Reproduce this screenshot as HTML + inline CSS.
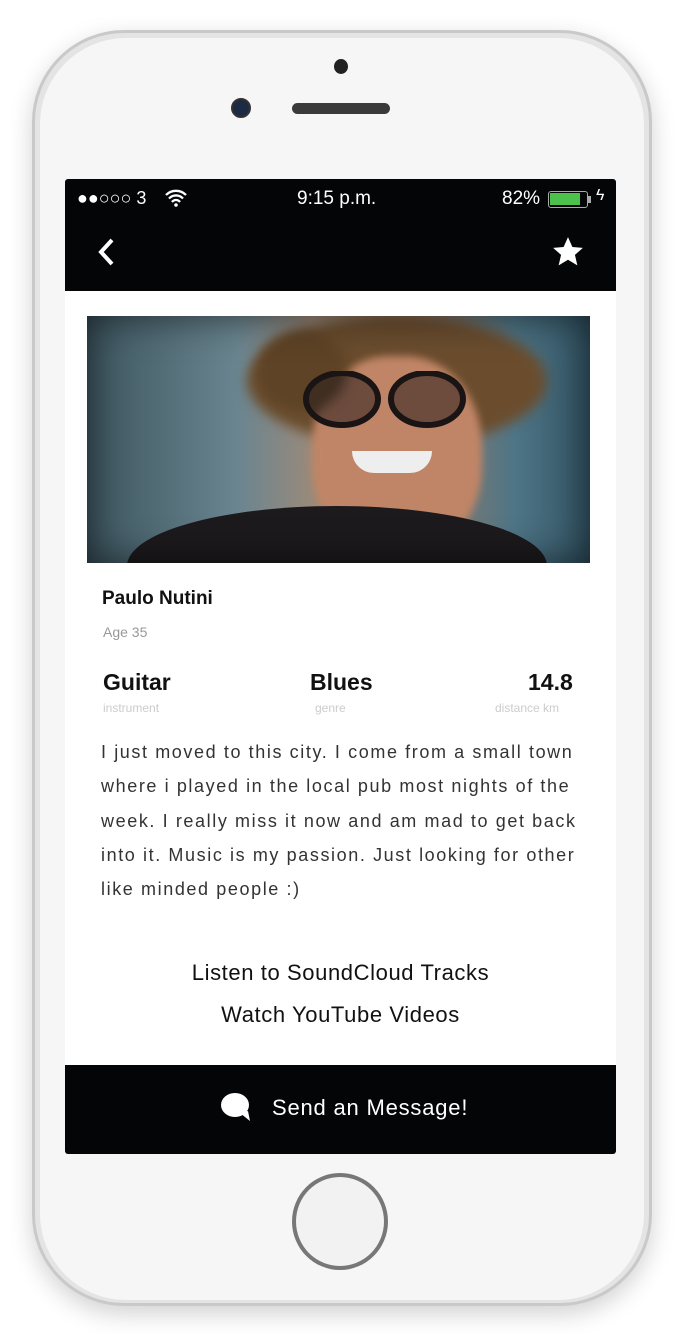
<!DOCTYPE html>
<html><head><meta charset="utf-8"><style>
*{margin:0;padding:0;box-sizing:border-box}
body{width:682px;height:1334px;background:#fff;position:relative;overflow:hidden;font-family:"Liberation Sans",sans-serif}
.phone{position:absolute;left:32px;top:30px;width:620px;height:1276px;border-radius:92px;background:#e4e4e4;border:3px solid #c9c9c9;box-shadow:0 8px 24px rgba(0,0,0,.18)}
.face{position:absolute;left:40px;top:38px;width:604px;height:1262px;border-radius:86px;background:#f6f6f6}
.abs{position:absolute}
.screen{position:absolute;left:65px;top:179px;width:551px;height:975px;background:#fff;border-radius:3px;overflow:hidden}
.top{position:absolute;left:0;top:0;width:551px;height:112px;background:#040506;color:#fff}
.bot{position:absolute;left:0;top:886px;width:551px;height:89px;background:#040506;color:#fff}
.t{position:absolute;white-space:nowrap}
</style></head><body>
<div class="phone"></div>
<div class="face"></div>
<div class="abs" style="left:334px;top:59px;width:14px;height:15px;border-radius:50%;background:#222"></div>
<div class="abs" style="left:231px;top:98px;width:20px;height:20px;border-radius:50%;background:#1d2a44;border:2px solid #333"></div>
<div class="abs" style="left:292px;top:103px;width:98px;height:11px;border-radius:6px;background:#3a3a3a"></div>
<div class="abs" style="left:292px;top:1173px;width:96px;height:97px;border-radius:50%;border:4px solid #777;background:#f2f2f2"></div>

<div class="screen">
 <div class="top">
  <div class="t" style="left:12px;top:9px;font-size:18px">●●○○○ 3</div>
  <svg class="abs" style="left:100px;top:10px" width="22" height="18" viewBox="0 0 22 18"><path d="M1 6a14 14 0 0 1 20 0M4 9.5a9.5 9.5 0 0 1 14 0M7 13a5 5 0 0 1 8 0" stroke="#fff" stroke-width="2.3" fill="none"/><circle cx="11" cy="16" r="1.8" fill="#fff"/></svg>
  <div class="t" style="left:232px;top:9px;font-size:19px">9:15 p.m.</div>
  <div class="t" style="left:437px;top:9px;font-size:19px">82%</div>
  <div class="abs" style="left:483px;top:12px;width:40px;height:17px;border:1.5px solid #aaa;border-radius:3px;padding:1px"><div style="width:30px;height:12px;background:#4cc24c"></div></div>
  <div class="abs" style="left:523px;top:17px;width:3px;height:7px;background:#aaa"></div>
  <div class="t" style="left:531px;top:8px;font-size:16px">ϟ</div>
  <svg class="abs" style="left:32px;top:58px" width="20" height="30" viewBox="0 0 20 30"><path d="M15 3L4 15l11 12" stroke="#fff" stroke-width="4" fill="none"/></svg>
  <svg class="abs" style="left:486px;top:56px" width="34" height="34" viewBox="0 0 24 24"><path d="M12 1.5l3.1 7 7.4.6-5.6 4.9 1.7 7.4L12 17.5 5.4 21.4l1.7-7.4L1.5 9.1l7.4-.6z" fill="#fff"/></svg>
 </div>
 <div class="abs" style="left:22px;top:137px;width:503px;height:247px;overflow:hidden;background:linear-gradient(90deg,#3d5660 0%,#6a8590 30%,#9a8a7a 45%,#9a7c68 65%,#4e7586 85%,#335566 100%)">
  <div class="abs" style="left:160px;top:0;width:300px;height:130px;border-radius:50%;background:#6b4d2e;filter:blur(6px)"></div>
  <div class="abs" style="left:225px;top:40px;width:170px;height:200px;border-radius:45%;background:#c08566;filter:blur(4px)"></div>
  <div class="abs" style="left:170px;top:15px;width:90px;height:80px;border-radius:50%;background:#5e4326;filter:blur(6px)"></div>
  <svg class="abs" style="left:210px;top:55px" width="180" height="60"><ellipse cx="45" cy="28" rx="36" ry="26" fill="rgba(40,30,30,.55)" stroke="#1a1414" stroke-width="6"/><ellipse cx="130" cy="28" rx="36" ry="26" fill="rgba(40,30,30,.55)" stroke="#1a1414" stroke-width="6"/></svg>
  <div class="abs" style="left:265px;top:135px;width:80px;height:22px;border-radius:0 0 40px 40px;background:#eee"></div>
  <div class="abs" style="left:40px;top:190px;width:420px;height:120px;border-radius:50%;background:#1c1a1c"></div>
  <div class="abs" style="left:0;top:0;width:503px;height:247px;box-shadow:inset 0 0 40px rgba(0,0,0,.6)"></div>
 </div>
 <div class="t" style="left:37px;top:409px;font-size:19px;font-weight:bold;color:#111">Paulo Nutini</div>
 <div class="t" style="left:38px;top:445px;font-size:14px;color:#999">Age 35</div>
 <div class="t" style="left:38px;top:490px;font-size:23px;font-weight:bold;color:#111">Guitar</div>
 <div class="t" style="left:245px;top:490px;font-size:23px;font-weight:bold;color:#111">Blues</div>
 <div class="t" style="left:463px;top:490px;font-size:23px;font-weight:bold;color:#111">14.8</div>
 <div class="t" style="left:38px;top:522px;font-size:12px;color:#ccc">instrument</div>
 <div class="t" style="left:250px;top:522px;font-size:12px;color:#ccc">genre</div>
 <div class="t" style="left:430px;top:522px;font-size:12px;color:#ccc">distance km</div>
 <div class="t" style="left:36px;top:556px;font-size:18px;line-height:34.3px;color:#333;letter-spacing:1.6px">I just moved to this city. I come from a small town<br>where i played in the local pub most nights of the<br>week. I really miss it now and am mad to get back<br>into it. Music is my passion. Just looking for other<br>like minded people :)</div>
 <div class="t" style="left:0;width:551px;text-align:center;top:781px;font-size:22px;letter-spacing:0.6px;color:#111">Listen to SoundCloud Tracks</div>
 <div class="t" style="left:0;width:551px;text-align:center;top:823px;font-size:22px;letter-spacing:0.6px;color:#111">Watch YouTube Videos</div>
 <div class="bot">
  <svg class="abs" style="left:155px;top:26px" width="34" height="34" viewBox="0 0 34 34"><ellipse cx="15" cy="14" rx="14" ry="12" fill="#fff"/><path d="M20 22l10 8-2-10z" fill="#fff"/></svg>
  <div class="t" style="left:207px;top:30px;font-size:22px;letter-spacing:0.8px">Send an Message!</div>
 </div>
</div>
</body></html>
